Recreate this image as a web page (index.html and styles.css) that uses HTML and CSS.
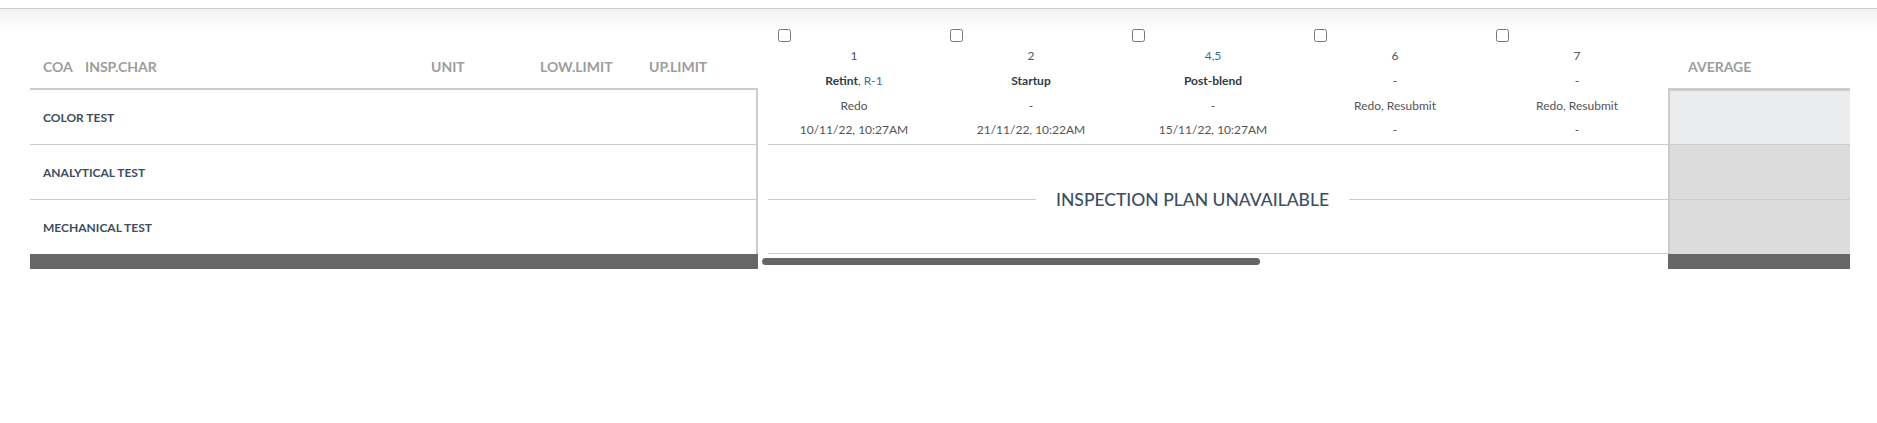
FILE: index.html
```html
<!DOCTYPE html>
<html>
<head>
<meta charset="utf-8">
<link rel="stylesheet" href="styles.css">
</head>
<body>
<div class="page">
  <div class="board">
    <section class="fixed-left">
      <div class="lhead">
        <span class="h-coa">COA</span>
        <span class="h-char">INSP.CHAR</span>
        <span class="h-unit">UNIT</span>
        <span class="h-low">LOW.LIMIT</span>
        <span class="h-up">UP.LIMIT</span>
      </div>
      <div class="lbody">
        <div class="lrow">COLOR TEST</div>
        <div class="lrow">ANALYTICAL TEST</div>
        <div class="lrow last">MECHANICAL TEST</div>
      </div>
      <div class="foot"></div>
    </section>

    <section class="scroller">
      <div class="cols">
        <div class="col first">
          <input type="checkbox" class="chk">
          <div class="num">1</div>
          <div class="name"><b>Retint</b>, <span class="link">R-1</span></div>
          <div class="status">Redo</div>
          <div class="date">10/11/22, 10:27AM</div>
        </div>
        <div class="col">
          <input type="checkbox" class="chk">
          <div class="num">2</div>
          <div class="name"><b>Startup</b></div>
          <div class="status">-</div>
          <div class="date">21/11/22, 10:22AM</div>
        </div>
        <div class="col">
          <input type="checkbox" class="chk">
          <div class="num link">4,5</div>
          <div class="name"><b>Post-blend</b></div>
          <div class="status">-</div>
          <div class="date">15/11/22, 10:27AM</div>
        </div>
        <div class="col">
          <input type="checkbox" class="chk">
          <div class="num">6</div>
          <div class="name">-</div>
          <div class="status">Redo, Resubmit</div>
          <div class="date">-</div>
        </div>
        <div class="col">
          <input type="checkbox" class="chk">
          <div class="num">7</div>
          <div class="name">-</div>
          <div class="status">Redo, Resubmit</div>
          <div class="date">-</div>
        </div>
      </div>
      <div class="unavail">
        <span class="rule left"></span>
        <span class="unavail-text">INSPECTION PLAN UNAVAILABLE</span>
        <span class="rule right"></span>
      </div>
      <div class="scrollbar"><div class="thumb"></div></div>
    </section>

    <section class="avg">
      <div class="ahead">AVERAGE</div>
      <div class="abody">
        <div class="arow light"></div>
        <div class="arow"></div>
        <div class="arow last"></div>
      </div>
      <div class="foot"></div>
    </section>
  </div>
</div>
</body>
</html>
```

FILE: styles.css
```css
* { box-sizing: border-box; }
html, body { margin: 0; padding: 0; background: #fff; }
body { font-family: "Lato", "Liberation Sans", sans-serif; width: 1877px; height: 423px; overflow: hidden; }

.page {
  margin-top: 8px;
  border-top: 1px solid #cfcfcf;
  background: linear-gradient(#f2f2f2, #ffffff 22px);
  padding: 11px 0 0 30px;
  height: 414px;
}

.board { display: flex; align-items: flex-start; }

/* left fixed table */
.fixed-left { width: 728px; }
.lhead {
  height: 70px;
  border-bottom: 2px solid #cccccc;
  display: grid;
  grid-template-columns: 42px 346px 109px 109px 1fr;
  padding: 0 0 11px 13px;
  align-items: end;
  font-size: 14px;
  font-weight: 700;
  color: #9d9d9d;
  line-height: 20px;
}
.lbody { border-right: 2px solid #cccccc; }
.lrow {
  height: 55px;
  border-bottom: 1px solid #cccccc;
  display: flex;
  align-items: center;
  padding-left: 13px;
  font-size: 12px;
  font-weight: 700;
  color: #3d4e61;
}
.lrow.last { height: 54px; border-bottom: 0; }
.foot { height: 15px; background: #666666; }

/* middle scroller */
.scroller { width: 910px; padding-left: 10px; }
.cols { display: flex; border-bottom: 1px solid #cccccc; height: 125px; }
.col {
  width: 182px;
  display: flex;
  flex-direction: column;
  align-items: center;
  font-size: 12px;
  color: #555555;
  position: relative;
  padding-top: 23px;
}
.col.first { width: 172px; }
.chk {
  position: absolute;
  left: 10px;
  top: 9px;
  margin: 0;
  width: 13px;
  height: 13px;
}
.num, .name, .status, .date { height: 25px; line-height: 25px; white-space: nowrap; }
.date { height: 23px; line-height: 23px; }
.name b { font-weight: 700; color: #2f3b48; }
.link { color: #3f6f99; }

.unavail {
  height: 109px;
  border-bottom: 1px solid #cccccc;
  display: flex;
  align-items: center;
}
.rule { height: 1px; background: #cccccc; }
.rule.left { width: 268px; margin-right: 20px; }
.rule.right { flex: 1; margin-left: 20px; }
.unavail-text {
  font-size: 17.5px;
  color: #3d4e61;
  font-weight: 500;
  line-height: 20px;
  padding-top: 2px;
  white-space: nowrap;
}
.scrollbar { height: 15px; margin-left: -6px; padding-top: 4px; }
.thumb { width: 498px; height: 7px; border-radius: 4px; background: #666666; }

/* average column */
.avg { width: 182px; }
.ahead {
  height: 68px;
  padding: 0 0 11px 20px;
  display: flex;
  align-items: flex-end;
  font-size: 14px;
  font-weight: 700;
  color: #9d9d9d;
  line-height: 20px;
}
.abody { border-top: 3px solid #cccccc; border-left: 2px solid #cccccc; }
.arow { height: 55px; border-bottom: 1px solid #cccccc; background: #dcdcdc; }
.arow.light { height: 54px; background: #ebecee; }
.arow.last { height: 54px; border-bottom: 0; }
```
